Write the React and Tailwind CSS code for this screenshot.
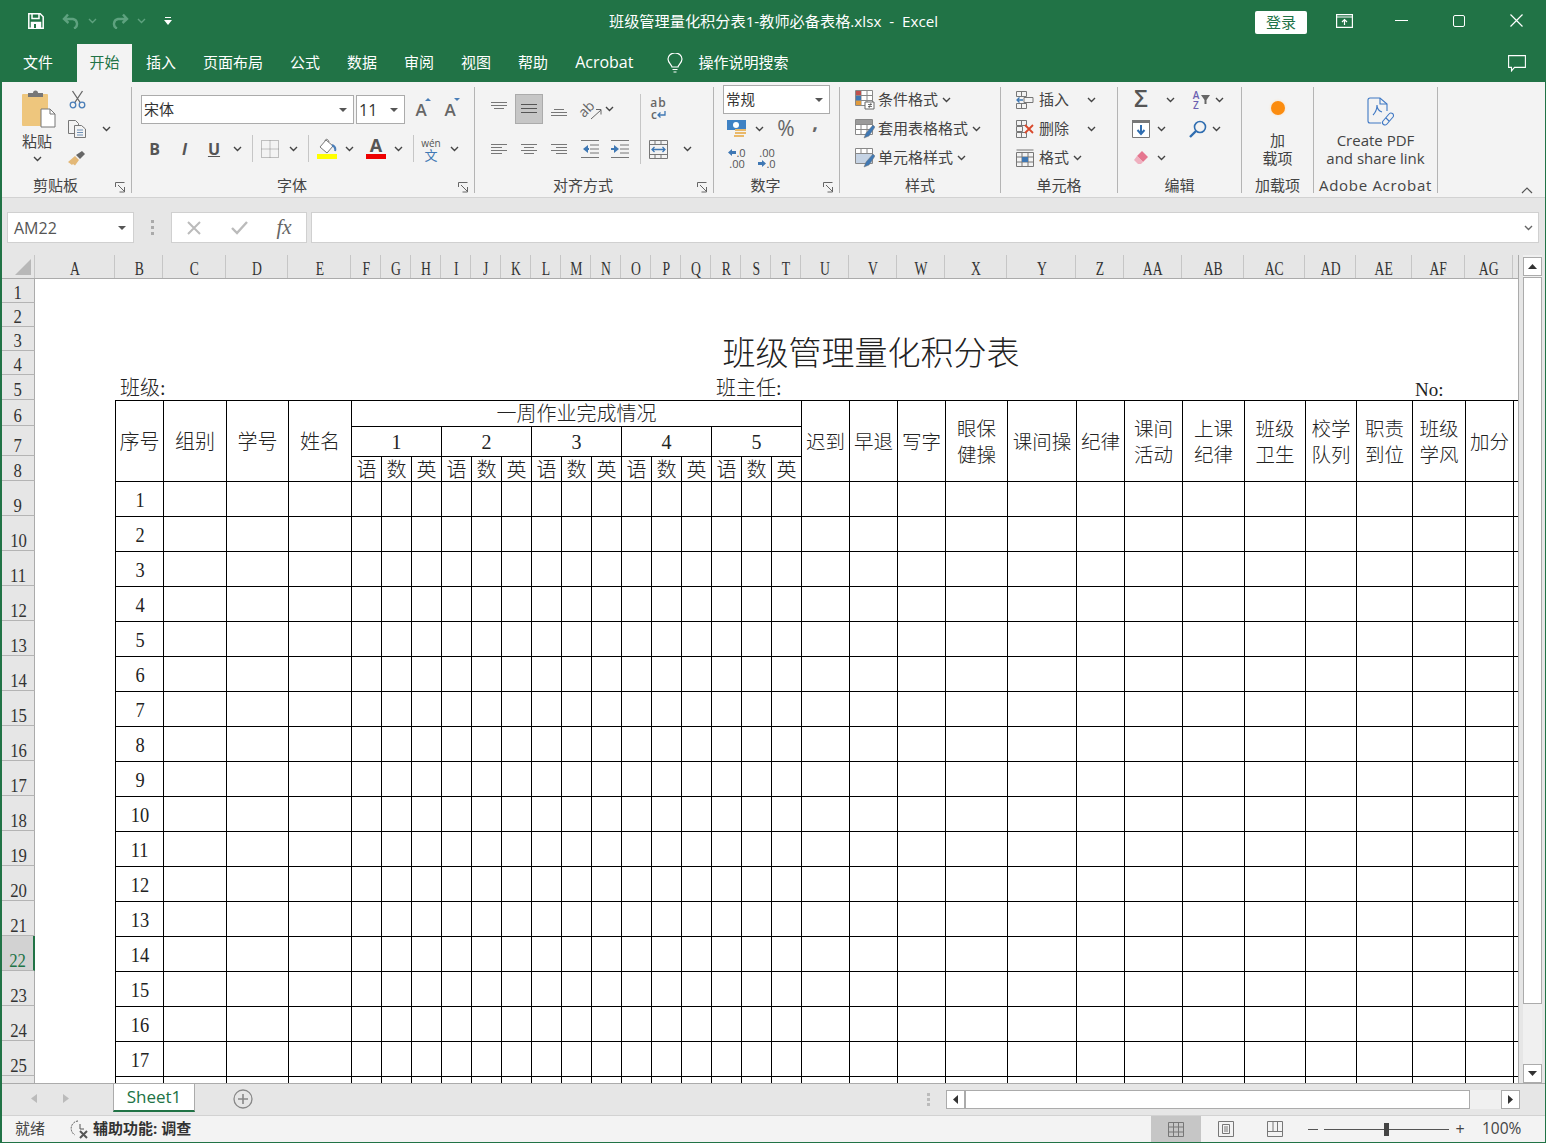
import React from "react";

const sheetGrid =
  "grid grid-cols-[80px_48px_63px_62px_63px_repeat(15,30px)_48px_48px_48px_62px_69px_48px_58px_62px_61px_51px_56px_53px_48px_6px]";

const columns = ["A","B","C","D","E","F","G","H","I","J","K","L","M","N","O","P","Q","R","S","T","U","V","W","X","Y","Z","AA","AB","AC","AD","AE","AF","AG",""];

const rowHeads = [
  { n: 1, h: "h-[24px]" }, { n: 2, h: "h-[24px]" }, { n: 3, h: "h-[24px]" }, { n: 4, h: "h-[24px]" },
  { n: 5, h: "h-[25px]" }, { n: 6, h: "h-[26px]" }, { n: 7, h: "h-[30px]" }, { n: 8, h: "h-[25px]" },
  ...Array.from({ length: 17 }, (_, i) => ({ n: i + 9, h: "h-[35px]" })),
  { n: "", h: "h-[35px]" },
];

const Chev = ({ c = "#444", className = "" }) => (
  <svg width="9" height="6" viewBox="0 0 9 6" fill="none" stroke={c} strokeWidth="1.4" className={`shrink-0 ${className}`}>
    <path d="M1 1l3.5 3.5L8 1" />
  </svg>
);

const Caret = ({ c = "#555" }) => (
  <svg width="8" height="4" viewBox="0 0 8 4" fill={c} className="shrink-0"><path d="M0 0h8L4 4z" /></svg>
);

const Launcher = () => (
  <svg width="11" height="11" viewBox="0 0 11 11" fill="none" stroke="#666" className="absolute right-[5px] bottom-[4px]">
    <path d="M.5 5V.5h9" /><path d="M.5 10.5h0" /><path d="M3 3l6 6M9.5 5v5h-5" />
  </svg>
);

const Lines = ({ d, active }) => (
  <svg width="22" height="22" viewBox="0 0 22 22" fill="none" stroke={active ? "#555" : "#777"} strokeWidth="1">
    <path d={d} />
  </svg>
);

const Box = ({ className = "", children }) => (
  <div className={`flex items-center justify-center shrink-0 ${className}`}>{children}</div>
);

function Group({ className, label, launcher, children }) {
  return (
    <div className={`relative flex flex-col self-stretch shrink-0 pt-[3px] ${className}`}>
      <div className="flex-1 min-h-0">{children}</div>
      <div className={`h-[15px] mb-[4px] text-center text-[15px] leading-[15px] whitespace-nowrap ${launcher ? "pr-[22px]" : ""}`}>{label}</div>
      {launcher && <Launcher />}
    </div>
  );
}

const Sep = () => <div className="w-px h-[106px] bg-[#b4b4b4] shrink-0" />;
const MiniSep = () => <div className="w-px h-[27px] bg-[#c6c6c6]" />;

function TitleBar() {
  return (
    <div className="flex items-center h-[41px] text-white">
      <div className="flex-1 basis-0 flex items-center pl-[28px]">
        <svg width="16" height="16" viewBox="0 0 16 16" fill="none" stroke="#fff" strokeWidth="1.5">
          <path d="M.8.8h11.4l3 3v11.4H.8z" />
          <path d="M4 1v4.5h7V1" />
          <path d="M3.5 15.5V9.5h9v6" fill="#fff" />
          <path d="M7 11v4" stroke="#217346" strokeWidth="2" />
        </svg>
        <svg width="18" height="16" viewBox="0 0 18 16" fill="none" stroke="#5ea27f" strokeWidth="2.4" className="ml-[18px]">
          <path d="M6 1.5L2 6l4.500 4M2 6h9a5 5 0 0 1 1 9.500" />
        </svg>
        <Chev c="#5ea27f" className="ml-[8px]" />
        <svg width="18" height="16" viewBox="0 0 18 16" fill="none" stroke="#5ea27f" strokeWidth="2.4" className="ml-[14px] -scale-x-100">
          <path d="M6 1.5L2 6l4.500 4M2 6h9a5 5 0 0 1 1 9.500" />
        </svg>
        <Chev c="#5ea27f" className="ml-[8px]" />
        <svg width="8" height="8" viewBox="0 0 8 8" className="ml-[18px]" fill="#fff"><path d="M1 0h6v1H1zM0 3h8L4 8z" /></svg>
      </div>
      <div className="text-[15.2px] pt-[2px] mr-[4px] whitespace-pre">班级管理量化积分表1-教师必备表格.xlsx  -  Excel</div>
      <div className="flex-1 basis-0 flex items-center justify-end pr-[23px]">
        <div className="w-[52px] h-[23px] mt-[4px] bg-white rounded-[2px] text-[#217346] text-[15px] leading-[23px] text-center">登录</div>
        <svg width="17" height="14" viewBox="0 0 17 14" fill="none" stroke="#fff" strokeWidth="1.2" className="ml-[29px]">
          <path d="M.6.6h15.8v12.800H.6zM.6 3h15.800" /><path d="M8.500 11V6M6 8l2.500-2.500L11 8" />
        </svg>
        <div className="w-[13px] h-px bg-white ml-[42px]" />
        <div className="w-[12px] h-[12px] border border-white rounded-[2px] ml-[45px]" />
        <svg width="13" height="13" viewBox="0 0 13 13" stroke="#fff" strokeWidth="1.200" className="ml-[45px]"><path d="M.5.5l12 12M12.500.5l-12 12" /></svg>
      </div>
    </div>
  );
}

function TabBar() {
  const tabs = ["插入", "页面布局", "公式", "数据", "审阅", "视图", "帮助"];
  return (
    <div className="flex items-end h-[41px] text-white text-[15px] pl-[23px]">
      <div className="h-[38px] leading-[37px]">文件</div>
      <div className="h-[38px] w-[55px] ml-[24px] bg-[#f3f3f3] text-[#217346] text-center leading-[37px]">开始</div>
      {tabs.map((t, i) => (
        <div key={t} className={`h-[38px] leading-[37px] ${i === 0 ? "ml-[14px]" : "ml-[27px]"}`}>{t}</div>
      ))}
      <div className="h-[38px] leading-[37px] ml-[27px] text-[16px]">Acrobat</div>
      <div className="h-[38px] ml-[34px] flex items-center">
        <svg width="16" height="20" viewBox="0 0 16 20" fill="none" stroke="#fff" strokeWidth="1.200">
          <path d="M5 14c0-2-4-4-4-8a7 6 0 0 1 14 0c0 4-4 6-4 8zM5.500 16.500h5M6.500 19h3" />
        </svg>
      </div>
      <div className="h-[38px] leading-[37px] ml-[15px]">操作说明搜索</div>
      <div className="h-[38px] flex-1 flex items-center justify-end pr-[20px]">
        <svg width="18" height="17" viewBox="0 0 18 17" fill="none" stroke="#fff" strokeWidth="1.100">
          <path d="M.6.6h16.800v11.800H6.500l-3 3.500v-3.500H.6z" />
        </svg>
      </div>
    </div>
  );
}

function Clipboard() {
  return (
    <Group className="w-[129px] text-[#444]" label="剪贴板" launcher>
      <div className="flex">
        <div className="w-[44px] ml-[15px] flex flex-col items-center">
          <svg width="36" height="38" viewBox="0 0 36 38" className="mt-[5px]">
            <rect x="1" y="4" width="26" height="32" rx="1" fill="#eec67d" />
            <path d="M7 7V3h5a2.500 2.500 0 0 1 5 0h5v4z" fill="#777" />
            <path d="M20 19h9l5 5v13H20z" fill="#fff" stroke="#777" />
            <path d="M29 19v5h5" fill="none" stroke="#777" />
          </svg>
          <div className="text-[15px] leading-[20px] mt-[3px] mr-[4px]">粘贴</div>
          <Chev className="mt-[5px] mr-[4px]" />
        </div>
        <div className="w-[20px] ml-[6px] flex flex-col items-center">
          <Box className="h-[29px]">
            <svg width="17" height="19" viewBox="0 0 17 19" fill="none">
              <path d="M3.500 1l8 12M13.500 1l-8 12" stroke="#666" strokeWidth="1.300" />
              <circle cx="4" cy="15" r="2.800" stroke="#4a7eb8" strokeWidth="1.300" />
              <circle cx="13" cy="15" r="2.800" stroke="#4a7eb8" strokeWidth="1.300" />
            </svg>
          </Box>
          <Box className="h-[29px]">
            <svg width="18" height="18" viewBox="0 0 18 18" fill="none" stroke="#777">
              <path d="M.5.500h7l3 3v10H.5z" /><path d="M6.500 5.500h7l4 3.500v8.500h-11z" fill="#f3f3f3" /><path d="M9 10h6M9 12.500h6M9 15h6" stroke="#6d8fb5" />
            </svg>
          </Box>
          <Box className="h-[29px]">
            <svg width="18" height="16" viewBox="0 0 18 16">
              <path d="M0 12l7-6 4 4-4 5.500-2-1.500-1 1z" fill="#e3b877" />
              <path d="M8 5l4 4 5-5-3-3z" fill="#666" />
            </svg>
          </Box>
        </div>
        <Box className="w-[9px] h-[87px] ml-[15px]"><Chev /></Box>
      </div>
    </Group>
  );
}

function FontGroup() {
  const Select = ({ className, text, textClass = "text-[15px]" }) => (
    <div className={`h-[29px] bg-white border border-[#ababab] flex items-center justify-between pl-[2px] pr-[6px] ${className}`}>
      <span className={`text-[#333] ${textClass}`}>{text}</span>
      <Caret />
    </div>
  );
  return (
    <Group className="w-[342px] text-[#444]" label="字体" launcher>
      <div className="pl-[9px] pt-[10px]">
        <div className="flex items-center">
          <Select className="w-[213px]" text="宋体" />
          <Select className="w-[49px] ml-[2px]" text="11" textClass="text-[16px]" />
          <Box className="relative w-[20px] ml-[6px] text-[17px] text-[#666] font-semibold">
            A
            <svg width="6" height="3" viewBox="0 0 6 3" className="absolute top-[1px] right-0" fill="#4a7eb8"><path d="M3 0l3 3H0z" /></svg>
          </Box>
          <Box className="relative w-[20px] ml-[9px] text-[17px] text-[#666] font-semibold">
            A
            <svg width="6" height="3" viewBox="0 0 6 3" className="absolute top-[1px] right-0" fill="#4a7eb8"><path d="M0 0h6L3 3z" /></svg>
          </Box>
        </div>
        <div className="flex items-center h-[29px] mt-[10px]">
          <Box className="w-[27px] text-[16px] font-bold text-[#555]">B</Box>
          <Box className="w-[33px] text-[16px] font-bold italic text-[#555]">I</Box>
          <Box className="w-[26px] text-[16px] font-bold underline text-[#555]">U</Box>
          <Box className="w-[20px]"><Chev /></Box>
          <Box className="w-[10px]"><MiniSep /></Box>
          <Box className="w-[26px]">
            <svg width="18" height="18" viewBox="0 0 18 18" fill="none" stroke="#888" strokeDasharray="1 1"><path d="M.5.500h17v17H.5zM9 .500v17M.5 9h17" /></svg>
          </Box>
          <Box className="w-[20px]"><Chev /></Box>
          <Box className="w-[10px]"><MiniSep /></Box>
          <div className="w-[28px] flex flex-col items-center shrink-0">
            <svg width="20" height="16" viewBox="0 0 20 16" fill="none">
              <path d="M9 2l7 6-6 7-7-6z" fill="#fff" stroke="#777" />
              <path d="M8 3c0-2 3-3 4 1" stroke="#777" />
              <path d="M15 7c2 1 4 3 3 6" stroke="#4a7eb8" strokeWidth="2" />
            </svg>
            <div className="w-[20px] h-[5px] bg-[#ffff00]" />
          </div>
          <Box className="w-[16px]"><Chev /></Box>
          <div className="w-[32px] ml-[3px] flex flex-col items-center shrink-0">
            <span className="text-[18px] leading-[15px] font-bold text-[#555]">A</span>
            <div className="w-[20px] h-[5px] bg-[#ee0000] mt-[1px]" />
          </div>
          <Box className="w-[12px]"><Chev /></Box>
          <Box className="w-[18px]"><MiniSep /></Box>
          <div className="w-[18px] flex flex-col items-center shrink-0 leading-[12px]">
            <span className="text-[10px] text-[#555]">wén</span>
            <span className="text-[13px] text-[#3f78b4]">文</span>
          </div>
          <Box className="w-[28px]"><Chev /></Box>
        </div>
      </div>
    </Group>
  );
}

function AlignGroup() {
  return (
    <Group className="w-[238px] text-[#444]" label="对齐方式" launcher>
      <div className="flex pl-[9px] pt-[9px]">
        <div className="w-[156px] shrink-0">
          <div className="flex items-center h-[30px]">
            <Box className="w-[30px]"><Lines d="M3 4.500h16M3 7.500h16M6 10.500h10" /></Box>
            <Box className="w-[28px] h-[30px] ml-[1px] mr-[1px] bg-[#c6c6c6] border border-[#ababab]"><Lines active d="M3 6.500h16M3 10.500h16M3 14.500h16" /></Box>
            <Box className="w-[30px]"><Lines d="M6 11.500h10M3 14.500h16M3 17.500h16" /></Box>
            <Box className="w-[30px] relative">
              <span className="text-[14px] leading-none -rotate-45 text-[#666] -ml-[6px]">ab</span>
              <svg width="12" height="12" viewBox="0 0 12 12" fill="none" stroke="#666" className="absolute right-[2px] top-[6px]"><path d="M1 11L11 2M6 1.500h5v5" /></svg>
            </Box>
            <Box className="w-[10px]"><Chev /></Box>
          </div>
          <div className="flex items-center h-[30px] mt-[10px]">
            <Box className="w-[30px]"><Lines d="M3 6.500h16M3 9.500h11M3 12.500h16M3 15.500h11" /></Box>
            <Box className="w-[30px]"><Lines d="M3 6.500h16M6 9.500h10M3 12.500h16M6 15.500h10" /></Box>
            <Box className="w-[30px]"><Lines d="M3 6.500h16M8 9.500h11M3 12.500h16M8 15.500h11" /></Box>
            <Box className="w-[31px]">
              <svg width="20" height="18" viewBox="0 0 20 18" fill="none"><path d="M1 .5h18M10 5h9M10 9h9M10 13h9M1 17.500h18" stroke="#777" /><path d="M8 5L3 9l5 4z" fill="#3f78b4" /><path d="M5 9h4" stroke="#3f78b4" strokeWidth="2" /></svg>
            </Box>
            <Box className="w-[29px]">
              <svg width="20" height="18" viewBox="0 0 20 18" fill="none"><path d="M1 .5h18M10 5h9M10 9h9M10 13h9M1 17.500h18" stroke="#777" /><path d="M4 5l5 4-5 4z" fill="#3f78b4" /><path d="M1 9h4" stroke="#3f78b4" strokeWidth="2" /></svg>
            </Box>
          </div>
        </div>
        <div className="w-px h-[70px] bg-[#c6c6c6] shrink-0" />
        <div className="flex-1">
          <Box className="h-[30px] w-[35px] flex-col text-[12px] leading-[12px] font-semibold text-[#666]">
            <span className="tracking-[1px]">ab</span>
            <span className="flex items-center">c<svg width="9" height="8" viewBox="0 0 9 8" fill="none" stroke="#3f78b4" strokeWidth="1.300"><path d="M8 0v4H1M3.500 1.500L1 4l2.500 2.500" /></svg></span>
          </Box>
          <div className="flex items-center h-[30px] mt-[10px]">
            <Box className="w-[35px]">
              <svg width="19" height="19" viewBox="0 0 19 19" fill="none" stroke="#777"><path d="M.5.500h18v18H.5zM.5 4.500h18M.5 14.500h18M6 .500v4M12 .500v4M6 14.500v4M12 14.500v4" /><path d="M3 9.500h13M5.500 7l-2.500 2.500 2.500 2.500M13.500 7l2.500 2.500-2.500 2.500" stroke="#3f78b4" strokeWidth="1.300" /></svg>
            </Box>
            <Box className="w-[22px]"><Chev /></Box>
          </div>
        </div>
      </div>
    </Group>
  );
}

function NumberGroup() {
  return (
    <Group className="w-[125px] text-[#444]" label="数字" launcher>
      <div className="pl-[9px]">
        <div className="w-[107px] h-[29px] bg-white border border-[#ababab] flex items-center justify-between pl-[2px] pr-[6px]">
          <span className="text-[14.5px] text-[#333]">常规</span>
          <Caret />
        </div>
        <div className="flex items-center h-[29px]">
          <Box className="w-[28px]">
            <svg width="20" height="20" viewBox="0 0 20 20">
              <path d="M0 1h19v10H0z" fill="#3f82c4" /><circle cx="9" cy="6" r="3" fill="#fff" />
              <path d="M8 10h11v2H8zM8 13h11v2H8zM7 16h10v2H7z" fill="#e9b96a" />
            </svg>
          </Box>
          <Box className="w-[16px]"><Chev /></Box>
          <Box className="w-[38px] text-[21px] text-[#666]">%</Box>
          <Box className="w-[20px] text-[20px] font-bold leading-none text-[#666] pb-[14px]">,</Box>
        </div>
        <div className="flex items-center h-[29px] text-[11px] leading-[11px] text-[#555]">
          <Box className="w-[28px] flex-col">
            <span className="flex items-center"><svg width="8" height="7" viewBox="0 0 8 7" fill="#3f78b4"><path d="M0 3.500L4 0v2h4v3H4v2z" /></svg>.0</span>
            <span>.00</span>
          </Box>
          <Box className="w-[32px] flex-col">
            <span>.00</span>
            <span className="flex items-center"><svg width="8" height="7" viewBox="0 0 8 7" fill="#3f78b4"><path d="M8 3.500L4 0v2H0v3h4v2z" /></svg>.0</span>
          </Box>
        </div>
      </div>
    </Group>
  );
}

const TableIcon = ({ children }) => (
  <svg width="20" height="20" viewBox="0 0 20 20" fill="none" className="shrink-0">
    <path d="M.5.500h17v15H.5zM.5 5.500h17M.5 10.500h17M6 .500v15M12 .500v15" stroke="#888" fill="#fff" />
    {children}
  </svg>
);

function StyleGroup() {
  const Row = ({ icon, text }) => (
    <div className="flex items-center h-[29px]">
      {icon}
      <span className="text-[15px] ml-[3px] whitespace-nowrap">{text}</span>
      <Chev className="ml-[4px]" />
    </div>
  );
  const brush = <path d="M18 6l-7 8-2 5 5-2 6-9z" fill="#3f78b4" stroke="#777" strokeWidth=".5" />;
  return (
    <Group className="w-[160px] text-[#444]" label="样式">
      <div className="pl-[15px]">
        <Row text="条件格式" icon={<TableIcon><path d="M1 1h5v4H1z" fill="#c0504d" /><path d="M1 6h5v4H1z" fill="#3f78b4" /><path d="M1 11h5v4H1z" fill="#e09a3c" /><path d="M10 12h9v7h-9z" fill="#fff" stroke="#666" /><path d="M13 14.500h4M13 16.500h4M16 13l-2 5" stroke="#555" strokeWidth=".8" /></TableIcon>} />
        <Row text="套用表格格式" icon={<TableIcon><path d="M1 1h16v4H1z" fill="#9a9a9a" />{brush}</TableIcon>} />
        <Row text="单元格样式" icon={<TableIcon><path d="M1 6h16v9H1z" fill="#c5d3e4" />{brush}</TableIcon>} />
      </div>
    </Group>
  );
}

function CellsGroup() {
  const Row = ({ icon, text, gap }) => (
    <div className="flex items-center h-[29px]">
      {icon}
      <span className="text-[15px] ml-[5px]">{text}</span>
      <Chev className={gap} />
    </div>
  );
  const Base = ({ children }) => (
    <svg width="18" height="18" viewBox="0 0 18 18" fill="none" stroke="#777" className="shrink-0">{children}</svg>
  );
  return (
    <Group className="w-[116px] text-[#444]" label="单元格">
      <div className="pl-[15px]">
        <Row gap="ml-[18px]" text="插入" icon={<Base><path d="M.5.500h10v5H.5zM.5 12.500h10v5H.5zM5.500.500v5M5.500 12.500v5M8 6.500h9v5H8z" /><path d="M1 9h6M3.500 6.500L1 9l2.500 2.500" stroke="#3f78b4" strokeWidth="1.300" /></Base>} />
        <Row gap="ml-[18px]" text="删除" icon={<Base><path d="M.5.500h10v5H.5zM.5 12.500h10v5H.5zM5.500.500v5M5.500 12.500v5M.5 6.500h6v5H.5z" /><path d="M9 5l8 8M17 5l-8 8" stroke="#d9482b" strokeWidth="1.800" /></Base>} />
        <Row gap="ml-[4px]" text="格式" icon={<Base><path d="M.5 3.500h17v14H.5zM.5 8h17M.5 13h17M6 3.500v14M12 3.500v14M.5 1h17" /><path d="M6 8h6v5H6z" fill="#3f78b4" stroke="none" /></Base>} />
      </div>
    </Group>
  );
}

function EditGroup() {
  return (
    <Group className="w-[123px] text-[#444]" label="编辑">
      <div className="pl-[11px]">
        <div className="flex items-center h-[29px]">
          <Box className="w-[24px] text-[24px] leading-none font-semibold text-[#555] pb-[3px]">Σ</Box>
          <Box className="w-[34px]"><Chev /></Box>
          <Box className="w-[18px] flex-col text-[10px] leading-[10px] font-semibold text-[#6b5fb0]">
            <span>A</span><span>Z</span>
          </Box>
          <svg width="9" height="9" viewBox="0 0 9 9" fill="#666" className="-ml-[4px]"><path d="M0 0h9L5.500 5v4h-2V5z" /></svg>
          <Box className="w-[18px]"><Chev /></Box>
        </div>
        <div className="flex items-center h-[29px]">
          <Box className="w-[24px]">
            <svg width="18" height="18" viewBox="0 0 18 18" fill="none"><path d="M.5.500h17v17H.5z" stroke="#777" fill="#fff" /><path d="M0 0h18v3H0z" fill="#777" /><path d="M9 5v8M5.500 10L9 14l3.500-4" stroke="#2f6db0" strokeWidth="2" /></svg>
          </Box>
          <Box className="w-[16px]"><Chev /></Box>
          <Box className="w-[22px] ml-[18px]">
            <svg width="18" height="18" viewBox="0 0 18 18" fill="none" stroke="#2f6db0" strokeWidth="1.600"><circle cx="11" cy="7" r="5.500" /><path d="M7 11l-6 6" strokeWidth="2.400" /></svg>
          </Box>
          <Box className="w-[15px]"><Chev /></Box>
        </div>
        <div className="flex items-center h-[29px]">
          <Box className="w-[24px]">
            <svg width="16" height="16" viewBox="0 0 16 16"><path d="M9 1l6 6-5 5-6-6z" fill="#e5768f" /><path d="M4 6l6 6-2 2H5L1 10z" fill="#efb0bf" /></svg>
          </Box>
          <Box className="w-[16px]"><Chev /></Box>
        </div>
      </div>
    </Group>
  );
}

function Ribbon() {
  return (
    <div className="flex items-center h-[116px] bg-[#f3f3f3] border-b border-[#d2d2d2]">
      <Clipboard />
      <Sep />
      <FontGroup />
      <Sep />
      <AlignGroup />
      <Sep />
      <NumberGroup />
      <Sep />
      <StyleGroup />
      <Sep />
      <CellsGroup />
      <Sep />
      <EditGroup />
      <Sep />
      <Group className="w-[71px] text-[#444]" label="加载项">
        <div className="flex flex-col items-center">
          <div className="w-[14px] h-[14px] mt-[16px] rounded-full bg-[#fb8c0f] shadow-[0_0_3px_#fdb]" />
          <div className="text-[15px] leading-[18px] mt-[16px] text-center">加<br />载项</div>
        </div>
      </Group>
      <Sep />
      <Group className="w-[123px] text-[#444] font-['Open_Sans','Noto_Sans_CJK_SC',sans-serif]" label={<span className="text-[15px] tracking-[.7px]">Adobe Acrobat</span>}>
        <div className="flex flex-col items-center">
          <svg width="28" height="30" viewBox="0 0 28 30" fill="none" stroke="#3f78c4" strokeWidth="1.100" className="mt-[12px] ml-[8px]">
            <path d="M15 26H4a2 2 0 0 1-2-2V3a2 2 0 0 1 2-2h10l7 6v7" />
            <path d="M14 1v6h7M7 18c3-3 4-7 4-10 0 4 2 6 5 7" />
            <path d="M17 24l6-7a2.500 2.500 0 0 1 4 3l-6 7a2.500 2.500 0 0 1-4-3zM20 21l3 3" />
          </svg>
          <div className="text-[15px] leading-[18px] mt-[4px] text-center whitespace-nowrap">Create PDF<br />and share link</div>
        </div>
      </Group>
      <Sep />
      <div className="flex-1 self-end flex justify-end pr-[12px] pb-[3px]">
        <svg width="12" height="7" viewBox="0 0 12 7" fill="none" stroke="#555" strokeWidth="1.200"><path d="M1 6l5-5 5 5" /></svg>
      </div>
    </div>
  );
}

function FormulaBar() {
  return (
    <div className="flex items-start h-[57px] pt-[14px] pl-[5px] pr-[6px] bg-[#e6e6e6]">
      <div className="w-[127px] h-[31px] bg-white border border-[#d0d0d0] flex items-center justify-between pl-[6px] pr-[7px] text-[16px] text-[#555]">
        AM22
        <Caret />
      </div>
      <div className="w-[37px] h-[31px] flex flex-col items-center justify-center gap-[3px]">
        <i className="w-[3px] h-[3px] bg-[#aaa]" /><i className="w-[3px] h-[3px] bg-[#aaa]" /><i className="w-[3px] h-[3px] bg-[#aaa]" />
      </div>
      <div className="w-[136px] h-[31px] bg-white border border-[#d0d0d0] flex items-center">
        <Box className="w-[44px]">
          <svg width="16" height="14" viewBox="0 0 16 14" stroke="#bbb" strokeWidth="2"><path d="M2 1l12 12M14 1L2 13" /></svg>
        </Box>
        <Box className="w-[46px]">
          <svg width="17" height="14" viewBox="0 0 17 14" fill="none" stroke="#bbb" strokeWidth="2.400"><path d="M1 7l5 5L16 1" /></svg>
        </Box>
        <Box className="w-[44px] text-[21px] italic text-[#666] font-['Liberation_Serif',serif]">fx</Box>
      </div>
      <div className="flex-1 h-[31px] ml-[4px] bg-white border border-[#d0d0d0] flex items-center justify-end pr-[5px]">
        <Chev c="#666" />
      </div>
    </div>
  );
}

function Narrow({ className, children }) {
  return <span className={`inline-block ${className}`}>{children}</span>;
}

function ColumnHeader() {
  return (
    <div className="flex h-[24px] bg-[#e6e6e6] border-b border-[#ababab] font-['Liberation_Serif',serif] text-[#333]">
      <div className="w-[33px] shrink-0 flex justify-end items-end border-r border-[#c6c6c6] pr-[3px] pb-[3px]">
        <svg width="16" height="16" viewBox="0 0 16 16" fill="#b8b8b8"><path d="M16 0v16H0z" /></svg>
      </div>
      <div className={`${sheetGrid} w-[1484px] overflow-hidden`}>
        {columns.map((c, i) => (
          <div key={i} className="flex items-end justify-center h-[23px] pl-px border-r border-[#c6c6c6] overflow-hidden">
            <Narrow className="text-[19px] leading-[19px] scale-x-[.72]">{c}</Narrow>
          </div>
        ))}
      </div>
    </div>
  );
}

function RowHeader() {
  return (
    <div className="w-[33px] shrink-0 bg-[#e6e6e6] overflow-hidden font-['Liberation_Serif',serif] text-[#333]">
      {rowHeads.map((r) => {
        const active = r.n === 22;
        return (
          <div
            key={r.n === "" ? "x" : r.n}
            className={`${r.h} flex items-end justify-center border-b border-[#b4b4b4] ${active ? "bg-[#d2d2d2] text-[#217346] border-r-2 border-r-[#217346]" : "border-r border-r-[#ababab]"}`}
          >
            <Narrow className="text-[19px] leading-[18px] scale-x-[.88]">{r.n}</Narrow>
          </div>
        );
      })}
    </div>
  );
}

const cell = "flex items-center justify-center border-l border-t border-black overflow-hidden whitespace-nowrap";
const lang = [
  ["语", "col-start-6"], ["数", "col-start-7"], ["英", "col-start-8"],
  ["语", "col-start-9"], ["数", "col-start-10"], ["英", "col-start-11"],
  ["语", "col-start-12"], ["数", "col-start-13"], ["英", "col-start-14"],
  ["语", "col-start-15"], ["数", "col-start-16"], ["英", "col-start-17"],
  ["语", "col-start-18"], ["数", "col-start-19"], ["英", "col-start-20"],
];
const wideHeads = [
  { col: "col-start-21", lines: ["迟到"] },
  { col: "col-start-22", lines: ["早退"] },
  { col: "col-start-23", lines: ["写字"] },
  { col: "col-start-24", lines: ["眼保", "健操"] },
  { col: "col-start-25", lines: ["课间操"] },
  { col: "col-start-26", lines: ["纪律"] },
  { col: "col-start-27", lines: ["课间", "活动"] },
  { col: "col-start-28", lines: ["上课", "纪律"] },
  { col: "col-start-29", lines: ["班级", "卫生"] },
  { col: "col-start-30", lines: ["校学", "队列"] },
  { col: "col-start-31", lines: ["职责", "到位"] },
  { col: "col-start-32", lines: ["班级", "学风"] },
  { col: "col-start-33", lines: ["加分"] },
];

function SheetTop() {
  return (
    <div className={`${sheetGrid} grid-rows-[24px_24px_24px_24px_25px_26px_30px_25px]`}>
      <div className="col-start-4 col-end-[34] row-start-3 row-span-2 flex items-center justify-center pl-[3px] pt-[7px] text-[33px] whitespace-nowrap">班级管理量化积分表</div>
      <div className="col-start-2 col-span-3 row-start-5 pl-[5px] leading-[27px] whitespace-nowrap">班级:</div>
      <div className="col-start-6 col-span-15 row-start-5 pl-[365px] leading-[27px] whitespace-nowrap">班主任:</div>
      <div className="col-start-[32] col-span-2 row-start-5 pl-[3px] text-[19px] leading-[29px] whitespace-nowrap">No:</div>

      <div className={`${cell} col-start-2 row-start-6 row-span-3 pt-[2px]`}>序号</div>
      <div className={`${cell} col-start-3 row-start-6 row-span-3 pt-[2px]`}>组别</div>
      <div className={`${cell} col-start-4 row-start-6 row-span-3 pt-[2px]`}>学号</div>
      <div className={`${cell} col-start-5 row-start-6 row-span-3 pt-[2px]`}>姓名</div>
      <div className={`${cell} col-start-6 col-span-15 row-start-6`}>一周作业完成情况</div>
      <div className={`${cell} col-start-6 col-span-3 row-start-7`}>1</div>
      <div className={`${cell} col-start-9 col-span-3 row-start-7`}>2</div>
      <div className={`${cell} col-start-12 col-span-3 row-start-7`}>3</div>
      <div className={`${cell} col-start-15 col-span-3 row-start-7`}>4</div>
      <div className={`${cell} col-start-18 col-span-3 row-start-7`}>5</div>
      {lang.map(([t, col]) => (
        <div key={col} className={`${cell} ${col} row-start-8 pt-[2px]`}>{t}</div>
      ))}
      {wideHeads.map(({ col, lines }) => (
        <div key={col} className={`${cell} ${col} row-start-6 row-span-3 flex-col pt-[4px] leading-[26px] text-[19.5px]`}>
          {lines.map((l) => <span key={l}>{l}</span>)}
        </div>
      ))}
      <div className={`${cell} col-start-[34] row-start-6 row-span-3 justify-start pl-[4px] pt-[2px]`}>总</div>
    </div>
  );
}

function SheetBody() {
  const rows = Array.from({ length: 18 }, (_, i) => i + 1);
  return (
    <div className={`${sheetGrid} auto-rows-[35px]`}>
      {rows.map((r) => (
        <React.Fragment key={r}>
          <div />
          <div className={`${cell} pt-[1px]`}>
            {r < 18 && <Narrow className="scale-x-[.92]">{r}</Narrow>}
          </div>
          {Array.from({ length: 32 }, (_, i) => <div key={i} className={cell} />)}
        </React.Fragment>
      ))}
    </div>
  );
}

function VScroll() {
  const btn = "w-[19px] h-[19px] bg-white border border-[#ababab] flex items-center justify-center shrink-0";
  return (
    <div className="w-[26px] shrink-0 bg-[#e6e6e6] pl-[4px]">
      <div className="w-[19px] h-full flex flex-col bg-[#f0f0f0] pt-[2px]">
        <div className={btn}><svg width="9" height="5" viewBox="0 0 9 5" fill="#333"><path d="M4.500 0L9 5H0z" /></svg></div>
        <div className="h-[727px] bg-white border border-[#ababab] mt-px shrink-0" />
        <div className="flex-1" />
        <div className={btn}><svg width="9" height="5" viewBox="0 0 9 5" fill="#333"><path d="M0 0h9L4.500 5z" /></svg></div>
      </div>
    </div>
  );
}

function Sheet() {
  return (
    <div className="flex h-[828px] bg-white">
      <div className="flex flex-col w-[1517px] shrink-0 border-r border-[#ababab] overflow-hidden">
        <ColumnHeader />
        <div className="flex flex-1 min-h-0">
          <RowHeader />
          <div className="w-[1484px] overflow-hidden font-light font-['Liberation_Serif','Noto_Sans_CJK_SC',serif] text-[20px] text-[#222]">
            <SheetTop />
            <SheetBody />
          </div>
        </div>
      </div>
      <VScroll />
    </div>
  );
}

function SheetTabs() {
  const btn = "w-[19px] h-[19px] bg-white border border-[#ababab] flex items-center justify-center shrink-0";
  return (
    <div className="flex items-start h-[32px] bg-[#e6e6e6] border-t border-[#ababab]">
      <div className="flex items-center h-[28px] w-[111px] shrink-0 pl-[29px]">
        <svg width="6" height="9" viewBox="0 0 6 9" fill="#bbb"><path d="M6 0v9L0 4.500z" /></svg>
        <svg width="6" height="9" viewBox="0 0 6 9" fill="#bbb" className="ml-[26px]"><path d="M0 0v9l6-4.500z" /></svg>
      </div>
      <div className="w-[82px] h-[28px] bg-white border-x border-[#ababab] border-b-2 border-b-[#217346] text-[#217346] text-[17px] leading-[26px] text-center shrink-0 font-['Open_Sans',sans-serif]">Sheet1</div>
      <Box className="w-[20px] h-[30px] ml-[38px]">
        <svg width="20" height="20" viewBox="0 0 20 20" fill="none" stroke="#888" strokeWidth="1.300"><circle cx="10" cy="10" r="9" /><path d="M10 5v10M5 10h10" strokeWidth="1.600" /></svg>
      </Box>
      <div className="w-[3px] h-[30px] ml-[674px] flex flex-col items-center justify-center gap-[2px] shrink-0">
        <i className="w-[3px] h-[3px] bg-[#bbb]" /><i className="w-[3px] h-[3px] bg-[#bbb]" /><i className="w-[3px] h-[3px] bg-[#bbb]" />
      </div>
      <div className="flex w-[574px] h-[19px] ml-[16px] mt-[6px] shrink-0 bg-[#f0f0f0]">
        <div className={btn}><svg width="5" height="9" viewBox="0 0 5 9" fill="#333"><path d="M5 0v9L0 4.500z" /></svg></div>
        <div className="w-[505px] bg-white border border-[#ababab]" />
        <div className="flex-1" />
        <div className={btn}><svg width="5" height="9" viewBox="0 0 5 9" fill="#333"><path d="M0 0v9l5-4.500z" /></svg></div>
      </div>
    </div>
  );
}

function StatusBar() {
  return (
    <div className="flex items-center h-[27px] bg-[#f3f3f3] border-t border-[#d2d2d2] text-[#444]">
      <span className="ml-[13px] text-[15px] leading-[20px] pb-[2px]">就绪</span>
      <svg width="20" height="20" viewBox="0 0 20 20" fill="none" stroke="#555" className="ml-[25px] shrink-0">
        <path d="M8 2a7.500 7.500 0 0 0-3 14" strokeDasharray="2 1" />
        <path d="M10 5v5h4" />
        <path d="M10 12l7 7M17 12l-7 7" strokeWidth="2" />
      </svg>
      <span className="ml-[3px] text-[15px] leading-[20px] pb-[2px] font-bold text-[#333]">辅助功能: 调查</span>
      <div className="flex-1" />
      <Box className="w-[50px] h-[26px] bg-[#c6c6c6]">
        <svg width="16" height="15" viewBox="0 0 16 15" fill="none" stroke="#777"><path d="M.5.500h15v14H.5zM.5 5h15M.5 10h15M5.500.500v14M10.500.500v14" /></svg>
      </Box>
      <Box className="w-[49px]">
        <svg width="16" height="16" viewBox="0 0 16 16" fill="none" stroke="#777"><path d="M.5.500h15v15H.5zM4.500 3.500h7v9h-7zM6 6h4M6 8h4M6 10h4" /></svg>
      </Box>
      <Box className="w-[50px]">
        <svg width="16" height="16" viewBox="0 0 16 16" fill="none" stroke="#777"><path d="M.5.500h15v15H.5zM.5 10.500h15M6 .500v10M10.500 .500v10" /></svg>
      </Box>
      <div className="w-[10px] h-px bg-[#555] ml-[8px] shrink-0" />
      <div className="relative w-[125px] h-px bg-[#555] ml-[6px] shrink-0">
        <div className="absolute left-[60px] -top-[6px] w-[5px] h-[13px] bg-[#444]" />
      </div>
      <Box className="w-[10px] ml-[6px] text-[16px] leading-none">+</Box>
      <span className="w-[39px] ml-[17px] mr-[24px] text-[15.5px] whitespace-nowrap font-['Open_Sans',sans-serif]">100%</span>
    </div>
  );
}

export default function App() {
  return (
    <div className="w-[1546px] h-[1143px] overflow-hidden flex flex-col bg-[#217346] font-['Open_Sans','Noto_Sans_CJK_SC',sans-serif]">
      <TitleBar />
      <TabBar />
      <div className="flex flex-col ml-[2px] mr-px">
        <Ribbon />
        <FormulaBar />
        <Sheet />
        <SheetTabs />
        <StatusBar />
      </div>
    </div>
  );
}
